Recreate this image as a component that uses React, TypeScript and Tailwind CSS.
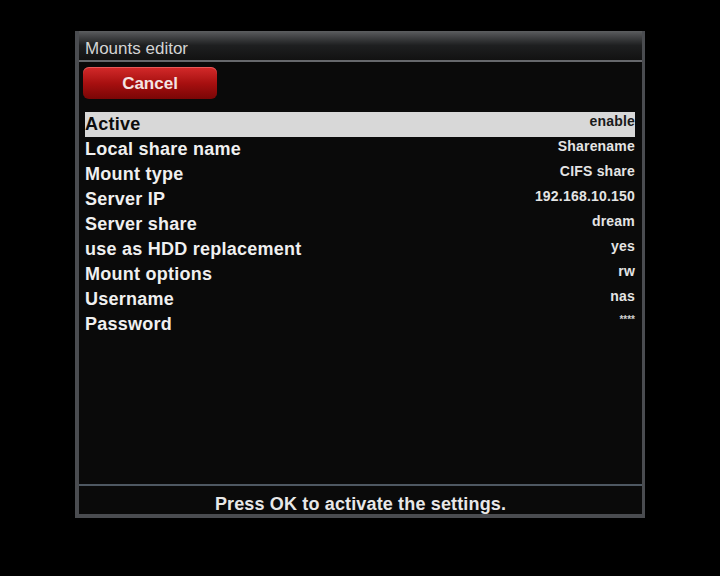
const rows = [
  { label: 'Active', value: 'enable' },
  { label: 'Local share name', value: 'Sharename' },
  { label: 'Mount type', value: 'CIFS share' },
  { label: 'Server IP', value: '192.168.10.150' },
  { label: 'Server share', value: 'dream' },
  { label: 'use as HDD replacement', value: 'yes' },
  { label: 'Mount options', value: 'rw' },
  { label: 'Username', value: 'nas' },
  { label: 'Password', value: '****' },
];

export default function App() {
  const selected = 0;

  return (
    <div className="w-[720px] h-[576px] bg-black pt-[31px] pl-[75px] font-['Liberation_Sans',Arial,sans-serif]">
      {/* Window */}
      <div className="w-[570px] h-[487px] flex flex-col bg-[#0a0a0a] border-l-4 border-r-[3px] border-b-4 border-[#4a4c50]">
        {/* Title bar */}
        <div className="h-[31px] flex items-center px-[6px] pt-[5px] bg-gradient-to-b from-[#5c5e60] via-[#1e1f20] to-[#121212] border-b-2 border-[#66686c]">
          <span className="text-[17px] text-[#d4d4d4] leading-none">Mounts editor</span>
        </div>

        <div className="flex-1 flex flex-col pt-[5px] px-[4px]">
          {/* Cancel button */}
          <button className="w-[134px] h-[32px] rounded-[6px] bg-gradient-to-b from-[#d42a2a] via-[#a81010] to-[#7a0606] shadow-[inset_0_1px_0_rgba(255,140,140,0.5)] text-[17px] font-bold text-[#f4e4e4] pt-[1px]">
            Cancel
          </button>

          {/* List */}
          <div className="flex-1 mt-[13px] px-[2px] pr-[3px]">
            {rows.map((row, i) => {
              const isActive = i === selected;
              return (
                <div
                  key={row.label}
                  className={`h-[25px] flex justify-between ${isActive ? 'bg-[#d8d8d8]' : ''}`}
                >
                  <span className={`text-[18px] font-bold tracking-[0.25px] leading-[22px] pt-[1px] ${isActive ? 'text-[#0c0c0c]' : 'text-[#f0f0f0]'}`}>
                    {row.label}
                  </span>
                  {row.label === 'Password' ? (
                    <span className="text-[10px] font-bold leading-[16px] text-[#d0d0d0]">{row.value}</span>
                  ) : (
                    <span className={`text-[14px] font-bold tracking-[0.2px] leading-[16px] pt-[1px] ${isActive ? 'text-[#1a1a1a]' : 'text-[#e4e4e4]'}`}>
                      {row.value}
                    </span>
                  )}
                </div>
              );
            })}
          </div>
        </div>

        {/* Footer */}
        <div className="h-[30px] border-t-2 border-[#4e5862] flex items-center justify-center">
          <span className="text-[18px] font-bold tracking-[0.15px] text-[#e8e8e8] mt-[8px]">Press OK to activate the settings.</span>
        </div>
      </div>
    </div>
  );
}
